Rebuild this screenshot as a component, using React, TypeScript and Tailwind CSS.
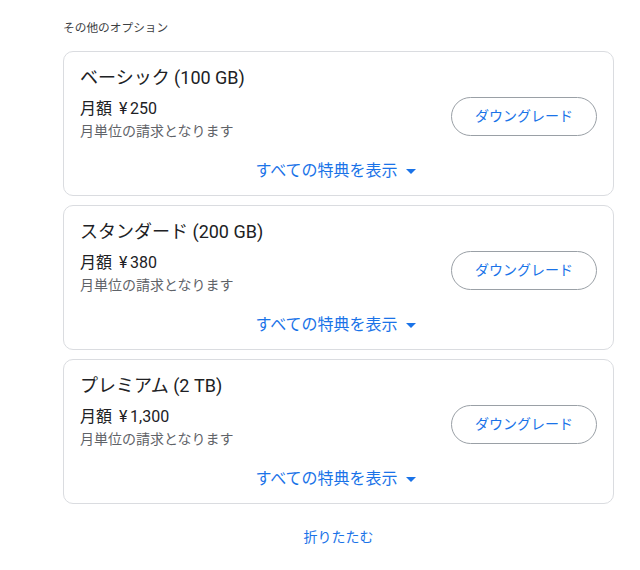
const plans = [
    { name: 'ベーシック (100 GB)', price: '250' },
    { name: 'スタンダード (200 GB)', price: '380' },
    { name: 'プレミアム (2 TB)', price: '1,300' },
];

const font = { fontFamily: 'Roboto, "Noto Sans CJK JP", sans-serif' };

export default function App() {
    return (
        <div className="w-[640px] h-[570px] bg-white" style={font}>
            <div className="pl-[63px] w-[614px]">
                <div className="pt-[20px] text-[11.7px] leading-[16px] text-[#3c4043]">その他のオプション</div>

                <div className="mt-[15px] flex flex-col gap-[9px]">
                    {plans.map((p) => (
                        <PlanCard key={p.name} name={p.name} price={p.price} />
                    ))}
                </div>

                <div className="mt-[21px] text-center">
                    <a href="#" className="text-[14px] leading-[20px] text-[#1a73e8]">折りたたむ</a>
                </div>
            </div>
        </div>
    );
}

interface PlanCardProps {
    name: string;
    price: string;
}

function PlanCard({ name, price }: PlanCardProps) {
    return (
        <div className="h-[145px] rounded-[10px] border border-[#dadce0] px-[16px] pt-[14px]">
            <div className="text-[18px] leading-[24px] text-[#202124]">{name}</div>
            <div className="flex items-start justify-between">
                <div className="pt-[8px]">
                    <div className="flex text-[16px] leading-[22px] text-[#202124]">
                        <span>月額</span>
                        <span className="ml-[7px] inline-block w-[11px]">¥</span>
                        <span>{price}</span>
                    </div>
                    <div className="text-[14px] leading-[22px] text-[#5f6368]">月単位の請求となります</div>
                </div>
                <button className="mt-[7px] h-[39px] w-[146px] rounded-full border border-[#9aa0a6] text-[14px] text-[#1a73e8]">
                    ダウングレード
                </button>
            </div>
            <div className="mt-[19px] flex items-center justify-center gap-[8px] pr-[6px] text-[16px] leading-[20px] text-[#1a73e8]">
                <span>すべての特典を表示</span>
                <svg width="10" height="5" viewBox="0 0 10 5">
                    <path d="M0 0h10L5 5z" fill="#1a73e8" />
                </svg>
            </div>
        </div>
    );
}
